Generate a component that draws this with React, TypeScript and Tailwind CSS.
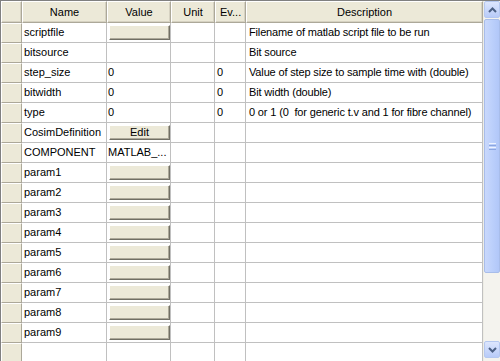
import React from "react";

const rows: { name: string; value?: string; btn?: string | boolean; unit?: string; ev?: string; desc?: string }[] = [
  { name: "scriptfile", btn: true, desc: "Filename of matlab script file to be run" },
  { name: "bitsource", desc: "Bit source" },
  { name: "step_size", value: "0", ev: "0", desc: "Value of step size to sample time with (double)" },
  { name: "bitwidth", value: "0", ev: "0", desc: "Bit width (double)" },
  { name: "type", value: "0", ev: "0", desc: "0 or 1 (0  for generic t.v and 1 for fibre channel)" },
  { name: "CosimDefinition", btn: "Edit" },
  { name: "COMPONENT", value: "MATLAB_..." },
  { name: "param1", btn: true },
  { name: "param2", btn: true },
  { name: "param3", btn: true },
  { name: "param4", btn: true },
  { name: "param5", btn: true },
  { name: "param6", btn: true },
  { name: "param7", btn: true },
  { name: "param8", btn: true },
  { name: "param9", btn: true },
  { name: "" },
];

const cell = "border-r border-b border-[#c0c0c0] h-[20px] flex items-center overflow-hidden whitespace-pre";
const hdr =
  "h-full flex items-center justify-center bg-[#ece9d8] border-t border-l border-white border-r border-b border-r-[#aca899] border-b-[#aca899] shadow-[inset_-1px_-1px_0_#d6d2c2]";

function Btn({ label }: { label?: string }) {
  return (
    <div className="ml-[1px] w-[61px] h-[15px] bg-[#ece9d8] border-t border-l border-white border-r border-b border-r-[#716f64] border-b-[#716f64] shadow-[inset_-1px_-1px_0_#aca899] flex items-center justify-center text-[11px]">
      {label}
    </div>
  );
}

export default function App() {
  return (
    <div
      className="w-[500px] h-[361px] overflow-hidden bg-[#ece9d8] flex border-t border-l border-[#808080] text-[11px] text-black"
      style={{ fontFamily: '"Liberation Sans", Arial, sans-serif' }}
    >
      <div className="flex flex-col w-[482px] bg-white">
        <div className="flex h-[22px] shrink-0">
          <div className={`${hdr} w-[21px]`} />
          <div className={`${hdr} w-[85px]`}>Name</div>
          <div className={`${hdr} w-[64px]`}>Value</div>
          <div className={`${hdr} w-[44px]`}>Unit</div>
          <div className={`${hdr} w-[31px] justify-start pl-[4px]`}>Ev...</div>
          <div className={`${hdr} w-[237px]`}>Description</div>
        </div>
        {rows.map((r, i) => (
          <div key={i} className="flex shrink-0">
            <div className="w-[21px] h-[20px] bg-[#ece9d8] border-t border-l border-white border-r border-b border-r-[#aca899] border-b-[#aca899]" />
            <div className={`${cell} w-[85px] pl-[2px]`}>{r.name}</div>
            <div className={`${cell} w-[64px] pl-[1px]`}>
              {r.btn ? <Btn label={typeof r.btn === "string" ? r.btn : undefined} /> : r.value}
            </div>
            <div className={`${cell} w-[44px]`}>{r.unit}</div>
            <div className={`${cell} w-[31px] pl-[2px]`}>{r.ev}</div>
            <div className={`${cell} w-[237px] pl-[3px] tracking-[-0.15px]`}>{r.desc}</div>
          </div>
        ))}
      </div>
      <div className="w-[17px] h-full flex flex-col bg-[#f4f3ee] border-l border-[#eeede5] pr-[1px]">
        <div className="w-[16px] h-[17px] rounded-[2px] border border-[#b5c8f0] bg-gradient-to-b from-[#dde6fd] to-[#b8cbf8] flex items-center justify-center">
          <svg width="9" height="6" viewBox="0 0 9 6">
            <path d="M1 5 L4.5 1.5 L8 5" stroke="#4d6185" strokeWidth="2" fill="none" />
          </svg>
        </div>
        <div className="mt-[1px] w-[16px] h-[254px] rounded-[2px] border border-[#a8bdea] bg-gradient-to-r from-[#c9d8fc] via-[#bcd0fb] to-[#b1c7f8] flex flex-col items-center justify-center gap-[1px]">
          <div className="w-[7px] h-[1px] bg-[#eef3fe]" />
          <div className="w-[7px] h-[1px] bg-[#8ca6e0]" />
          <div className="w-[7px] h-[1px] bg-[#eef3fe]" />
          <div className="w-[7px] h-[1px] bg-[#8ca6e0]" />
        </div>
        <div className="flex-1" />
        <div className="w-[16px] h-[17px] mb-[3px] rounded-[2px] border border-[#b5c8f0] bg-gradient-to-b from-[#dde6fd] to-[#b8cbf8] flex items-center justify-center">
          <svg width="9" height="6" viewBox="0 0 9 6">
            <path d="M1 1 L4.5 4.5 L8 1" stroke="#4d6185" strokeWidth="2" fill="none" />
          </svg>
        </div>
      </div>
    </div>
  );
}
